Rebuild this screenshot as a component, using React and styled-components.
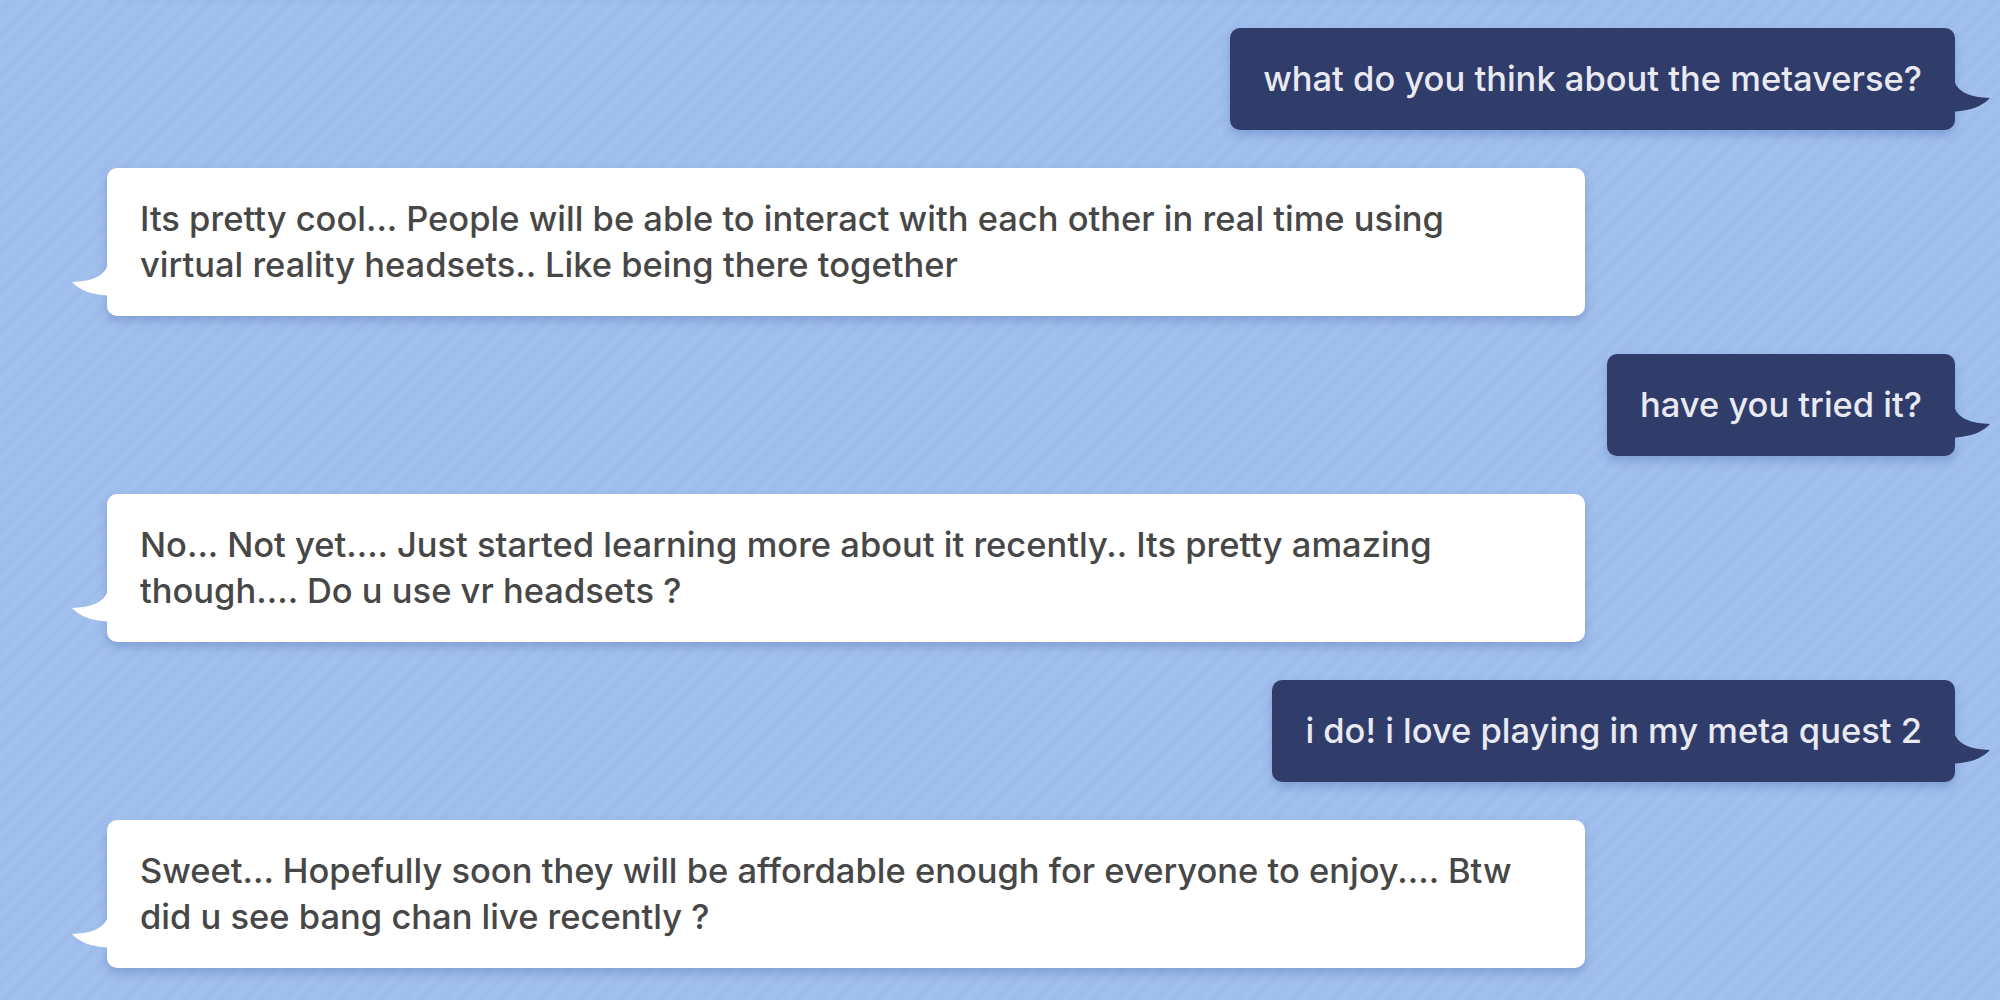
import React from "react";
import styled, { createGlobalStyle } from "styled-components";

const Global = createGlobalStyle`
  html, body { margin: 0; padding: 0; }
  body {
    width: 2000px;
    height: 1000px;
    overflow: hidden;
    background-color: #a0bfed;
    background-image: repeating-linear-gradient(
      135deg,
      rgba(255,255,255,0.02) 0px,
      rgba(255,255,255,0.02) 7px,
      rgba(60,90,160,0.018) 7px,
      rgba(60,90,160,0.018) 14px
    );
    font-family: Inter, "Noto Sans", sans-serif;
  }
`;

const Thread = styled.div`
  display: flex;
  flex-direction: column;
  gap: 38px;
  padding: 0 45px 0 107px;
  margin-top: -158px;
`;

const Bubble = styled.div`
  position: relative;
  max-width: 80%;
  box-sizing: border-box;
  padding: 28px 33px;
  border-radius: 10px;
  font-size: 34.5px;
  line-height: 46px;
  font-weight: ${(p) => (p.$me ? 500 : 450)};
  align-self: ${(p) => (p.$me ? "flex-end" : "flex-start")};
  background: ${(p) => (p.$me ? "#303d6b" : "#ffffff")};
  color: ${(p) => (p.$me ? "#e9e9f1" : "#474747")};
  box-shadow: 0 5px 10px rgba(50, 80, 150, 0.28);
`;

const Tail = styled.svg`
  position: absolute;
  bottom: ${(p) => (p.$me ? 18 : 20)}px;
  width: 38px;
  height: 29px;
  ${(p) => (p.$me ? "right: -36px; transform: scaleX(-1);" : "left: -36px;")}
`;

function Message({ me, children }) {
  return (
    <Bubble $me={me}>
      <Tail $me={me} viewBox="0 0 38 29">
        <path
          d="M38 0 L36 0 Q30 14 1 15 Q12 27 36 28.5 L38 28.5 Z"
          fill={me ? "#303d6b" : "#ffffff"}
        />
      </Tail>
      {children}
    </Bubble>
  );
}

const messages = [
  { me: false, text: "Yes... I've been hearing a lot about it lately. Everyone seems to be talking about the future of the internet" },
  { me: true, text: "what do you think about the metaverse?" },
  { me: false, text: "Its pretty cool... People will be able to interact with each other in real time using virtual reality headsets.. Like being there together" },
  { me: true, text: "have you tried it?" },
  { me: false, text: "No... Not yet.... Just started learning more about it recently.. Its pretty amazing though.... Do u use vr headsets ?" },
  { me: true, text: "i do! i love playing in my meta quest 2" },
  { me: false, text: "Sweet... Hopefully soon they will be affordable enough for everyone to enjoy.... Btw did u see bang chan live recently ?" },
];

export default function App() {
  return (
    <>
      <Global />
      <Thread>
        {messages.map((m, i) => (
          <Message key={i} me={m.me}>
            {m.text}
          </Message>
        ))}
      </Thread>
    </>
  );
}
